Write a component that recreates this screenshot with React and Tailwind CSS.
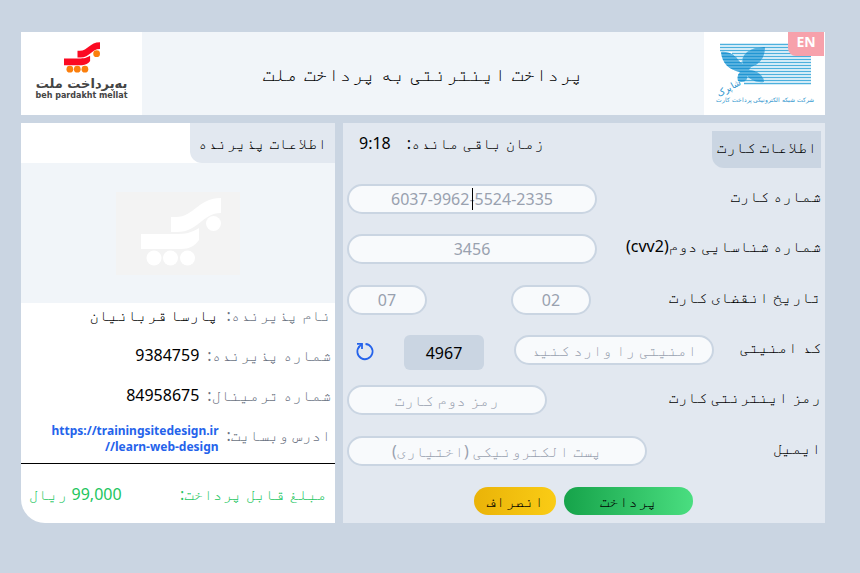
const field =
  "h-[30px] rounded-full border-2 border-slate-300 bg-slate-50 px-2 text-center text-base text-gray-400 placeholder:text-gray-400 outline-none";

function RefreshIcon() {
  return (
    <svg
      viewBox="0 0 20 20"
      className="size-5"
      fill="none"
      stroke="currentColor"
      strokeWidth="1.8"
      aria-hidden="true"
    >
      <path d="M10.500 3a7.600 7.600 0 1 1-6 2.300" />
      <path d="M2 2.800h5v5.200" />
      <path d="M7 2.800L3.500 6.300" />
    </svg>
  );
}

function MellatMark({ className, red, orange }) {
  return (
    <svg viewBox="0 0 80 68" className={className} aria-hidden="true">
      <g fill={red}>
        <path d="M30 19 h5 c18 0 22-19 45-19 v15 c-19 0-22 19-44 19 h-6 z" />
        <path d="M0 36 h33 c12 0 17-1 25-6 v12 c-4 6-10 9-18 9 h-40 z" />
      </g>
      <g fill={orange}>
        <circle cx="72.500" cy="25.500" r="7.500" />
        <circle cx="13" cy="60" r="7.500" />
        <circle cx="29.500" cy="60" r="7.500" />
        <circle cx="46.500" cy="60" r="7.500" />
      </g>
    </svg>
  );
}

function MellatLogo() {
  return (
    <div className="flex w-[121px] flex-col items-center bg-white pt-[10px]">
      <MellatMark className="h-[31px] w-[36px]" red="#fb0a22" orange="#fb7f0d" />
      <span className="mt-1 font-['DejaVu_Sans',sans-serif] text-[13px] leading-[14px] font-bold text-[#444]">
        به‌پرداخت ملت
      </span>
      <span
        className="font-['DejaVu_Sans',sans-serif] text-[8px] leading-[10px] font-bold text-[#444]"
        dir="ltr"
      >
        beh pardakht mellat
      </span>
    </div>
  );
}

function ShaparakLogo() {
  const lines = [0, 3, 6, 9, 12, 15, 18, 21, 24, 27, 30, 33, 36, 39];
  return (
    <div className="relative w-[121px] bg-white">
      <svg
        viewBox="0 0 121 83"
        className="h-full w-full font-['Noto_Sans',sans-serif]"
        role="img"
        aria-label="شاپرک"
      >
        <defs>
          <clipPath id="wings">
            <path d="M17 20 C24 19 32 23 35 29 L39 32 C36 24 44 15 61 15 C61 24 57 32 47 35 L45 38 C53 38 60 44 60 50 C53 51 47 48 43 44 C44 50 38 51 34 49 C33 45 34 42 36 40 C25 38 18 31 17 20 Z" />
          </clipPath>
        </defs>
        <g stroke="#4cb0dd" strokeWidth="1.400">
          {lines.map((y) => (
            <line
              key={y}
              x1={y < 9 ? 16 : y < 30 ? 19 + y : 40}
              x2="107"
              y1={12.5 + y}
              y2={12.5 + y}
            />
          ))}
        </g>
        <g clipPath="url(#wings)">
          <rect x="14" y="12" width="50" height="42" fill="#8fcdea" />
          <g stroke="#2196d3" strokeWidth="2.200">
            {lines.map((y) => (
              <line key={y} x1="14" x2="64" y1={12.5 + y} y2={12.5 + y} />
            ))}
          </g>
        </g>
        <g fill="#2b93cd" textAnchor="middle">
          <text x="25" y="59" fontSize="9" transform="rotate(-30 25 56)">
            شاپرک
          </text>
          <text x="61" y="70" fontSize="6">
            شرکت شبکه الکترونیکی پرداخت کارت
          </text>
        </g>
      </svg>
      <button
        type="button"
        className="absolute top-0 right-0 mr-px h-6 w-9 rounded-bl-lg bg-[#f7a1ab] pb-1 text-sm leading-5 font-bold text-white"
      >
        EN
      </button>
    </div>
  );
}

function InfoRow({ label, children }) {
  return (
    <div className="flex h-10 items-center gap-2 px-1">
      <dt className="text-gray-500">{label}</dt>
      <dd>{children}</dd>
    </div>
  );
}

function MerchantPanel() {
  return (
    <section className="flex w-[314px] flex-col rounded-bl-3xl bg-white">
      <h2 className="flex h-10 w-[145px] items-center rounded-bl-xl bg-slate-200 px-2 whitespace-nowrap">
        اطلاعات پذیرنده
      </h2>
      <div className="flex h-[140px] items-center justify-center bg-slate-100">
        <div className="flex h-[83px] w-[124px] items-start justify-center bg-[#f3f3f3] pt-[6px] pl-[6px]">
          <MellatMark className="h-[68px] w-20" red="#fff" orange="#fff" />
        </div>
      </div>
      <dl className="-mt-2 flex flex-col pb-2">
        <InfoRow label="نام پذیرنده:">پارسا قربانیان</InfoRow>
        <InfoRow label="شماره پذیرنده:">9384759</InfoRow>
        <InfoRow label="شماره ترمینال:">84958675</InfoRow>
        <InfoRow label="ادرس وبسایت:">
          <a href="#site" className="mt-2 block w-[170px] text-xs leading-4 font-bold text-[#2563eb]">
            https://trainingsitedesign.ir //learn-web-design
          </a>
        </InfoRow>
      </dl>
      <div className="flex flex-1 items-center justify-between border-t border-black px-2 text-[#22c55e]">
        <span>مبلغ قابل پرداخت:</span>
        <span>99,000 ریال</span>
      </div>
    </section>
  );
}

function Row({ id, label, children }) {
  return (
    <div className="flex flex-1 items-center justify-between px-1">
      <label htmlFor={id} className="pb-1.5">
        {label}
      </label>
      {children}
    </div>
  );
}

function CardPanel() {
  return (
    <section className="flex flex-1 flex-col bg-slate-200">
      <div className="flex h-[51px] justify-between pr-1">
        <h2 className="mt-2 flex h-[37px] w-[109px] items-center rounded-bl-xl bg-slate-300 px-1 pb-1.5 whitespace-nowrap">
          اطلاعات کارت
        </h2>
        <p className="mt-2 ml-4 flex flex-1 justify-end gap-4">
          <span>زمان باقی مانده:</span>
          <span>9:18</span>
        </p>
      </div>
      <form className="flex flex-1 flex-col">
        <Row id="card" label="شماره کارت">
          <div className="relative flex">
            <input
              id="card"
              autoFocus
              className={`${field} w-[250px] caret-transparent`}
              placeholder="6037-9962-5524-2335"
            />
            <span className="absolute inset-y-1 left-1/2 w-px bg-black" />
          </div>
        </Row>
        <Row id="cvv" label="شماره شناسایی دوم(cvv2)">
          <input id="cvv" className={`${field} w-[250px]`} placeholder="3456" />
        </Row>
        <Row id="month" label="تاریخ انقضای کارت">
          <div className="flex w-[244px] justify-between">
            <input id="month" className={`${field} w-20`} placeholder="02" />
            <input aria-label="سال" className={`${field} w-20`} placeholder="07" />
          </div>
        </Row>
        <Row id="captcha" label="کد امنیتی">
          <div className="flex h-[30px] w-[367px] items-start">
            <input id="captcha" className={`${field} w-[200px]`} placeholder="امنیتی را وارد کنید" />
            <output className="mr-[30px] flex h-[35px] w-20 items-center justify-center rounded-md bg-slate-300">
              4967
            </output>
            <button type="button" aria-label="تازه سازی" className="mt-1.5 mr-[29px] text-[#2563eb]">
              <RefreshIcon />
            </button>
          </div>
        </Row>
        <Row id="pin" label="رمز اینترنتی کارت">
          <input id="pin" className={`${field} w-[200px]`} placeholder="رمز دوم کارت" />
        </Row>
        <Row id="email" label="ایمیل">
          <input id="email" className={`${field} w-[300px]`} placeholder="پست الکترونیکی (اختیاری)" />
        </Row>
        <div className="flex gap-2 pt-[11px] pr-[132px] pb-2">
          <button
            type="submit"
            className="h-7 w-[129px] rounded-full bg-[linear-gradient(to_right,#16a34a,#4ade80)]"
          >
            پرداخت
          </button>
          <button
            type="button"
            className="h-7 w-[82px] rounded-full bg-[linear-gradient(to_right,#eab308,#facc15)]"
          >
            انصراف
          </button>
        </div>
      </form>
    </section>
  );
}

export default function App() {
  return (
    <div
      dir="rtl"
      className="flex min-h-screen flex-col gap-2 bg-slate-300 pt-8 pr-[35px] pb-8 pl-[21px] font-['Noto_Sans','FreeMono','Liberation_Mono','DejaVu_Sans_Mono',monospace] text-base text-black"
    >
      <header className="flex h-[83px] justify-between bg-slate-100">
        <ShaparakLogo />
        <h1 className="self-center text-xl">پرداخت اینترنتی به پرداخت ملت</h1>
        <MellatLogo />
      </header>
      <main className="flex min-h-[400px] gap-2">
        <CardPanel />
        <MerchantPanel />
      </main>
    </div>
  );
}
